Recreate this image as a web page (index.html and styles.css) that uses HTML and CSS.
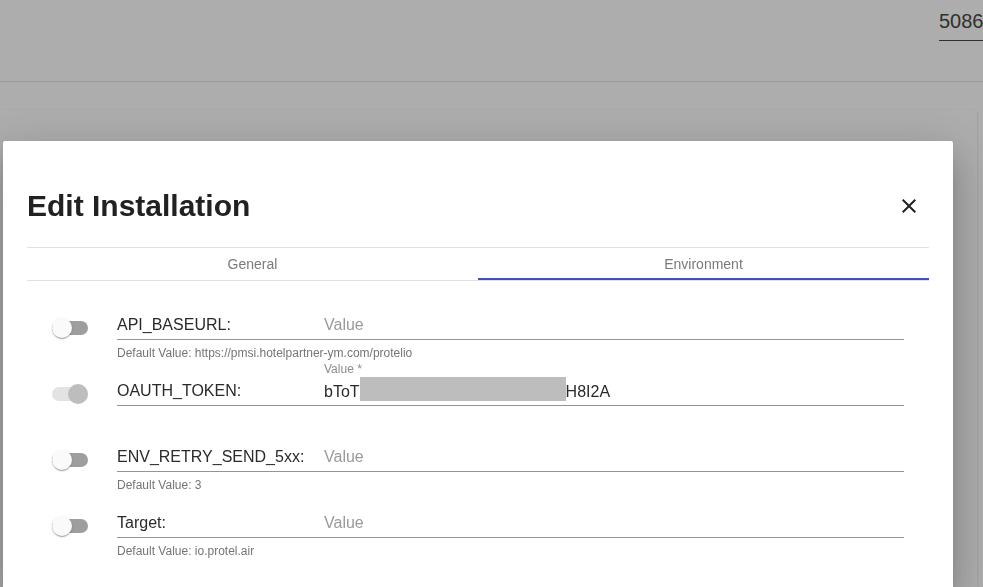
FILE: index.html
```html
<!DOCTYPE html>
<html lang="en">
<head>
<meta charset="utf-8">
<title>Edit Installation</title>
<link rel="stylesheet" href="styles.css">
</head>
<body>
<div class="app">
  <header class="topbar">
    <div class="search-field"><span class="search-value">5086</span></div>
  </header>
  <main class="content">
    <div class="card"></div>
  </main>
</div>
<div class="backdrop"></div>
<div class="dialog" role="dialog">
  <div class="dialog-header">
    <h1 class="dialog-title">Edit Installation</h1>
    <button class="close-btn" type="button" aria-label="Close">
      <svg viewBox="0 0 24 24" width="24" height="24"><path d="M19 6.41L17.59 5 12 10.59 6.41 5 5 6.41 10.59 12 5 17.59 6.41 19 12 13.41 17.59 19 19 17.59 13.41 12z" fill="#212121"/></svg>
    </button>
  </div>
  <div class="tabs">
    <div class="tab">General</div>
    <div class="tab tab-active">Environment</div>
  </div>
  <div class="env-list">
    <div class="env-row">
      <div class="toggle"><span class="toggle-knob"></span></div>
      <div class="field">
        <div class="field-box">
          <span class="field-label">API_BASEURL:</span>
          <div class="field-control">
            <span class="float-label"></span>
            <span class="field-input placeholder">Value</span>
          </div>
        </div>
        <div class="hint">Default Value: https://pmsi.hotelpartner-ym.com/protelio</div>
      </div>
    </div>
    <div class="env-row">
      <div class="toggle toggle-on"><span class="toggle-knob"></span></div>
      <div class="field">
        <div class="field-box">
          <span class="field-label">OAUTH_TOKEN:</span>
          <div class="field-control">
            <span class="float-label">Value *</span>
            <span class="field-input">bToT<span class="redacted"></span>H8I2A</span>
          </div>
        </div>
      </div>
    </div>
    <div class="env-row">
      <div class="toggle"><span class="toggle-knob"></span></div>
      <div class="field">
        <div class="field-box">
          <span class="field-label">ENV_RETRY_SEND_5xx:</span>
          <div class="field-control">
            <span class="float-label"></span>
            <span class="field-input placeholder">Value</span>
          </div>
        </div>
        <div class="hint">Default Value: 3</div>
      </div>
    </div>
    <div class="env-row">
      <div class="toggle"><span class="toggle-knob"></span></div>
      <div class="field">
        <div class="field-box">
          <span class="field-label">Target:</span>
          <div class="field-control">
            <span class="float-label"></span>
            <span class="field-input placeholder">Value</span>
          </div>
        </div>
        <div class="hint">Default Value: io.protel.air</div>
      </div>
    </div>
  </div>
</div>
</body>
</html>
```
FILE: styles.css
```css
* { box-sizing: border-box; }
html, body {
  margin: 0;
  width: 983px;
  height: 587px;
  overflow: hidden;
  background: #ffffff;
  font-family: "Liberation Sans", Arial, sans-serif;
}
.app {
  display: flex;
  flex-direction: column;
  height: 100%;
  overflow: hidden;
}
.topbar {
  height: 82px;
  flex: none;
  background: #ffffff;
  border-bottom: 1px solid #e4e4e4;
  display: flex;
  justify-content: flex-end;
  align-items: flex-start;
  overflow: hidden;
}
.search-field {
  width: 144px;
  margin-top: 9px;
  margin-right: -100px;
  flex: none;
  border-bottom: 1px solid #474747;
  padding-bottom: 7px;
}
.search-value {
  display: block;
  font-size: 20px;
  line-height: 24px;
  color: #474747;
}
.content {
  flex: 1;
  display: flex;
  padding-top: 28px;
  background: #ffffff;
  overflow: hidden;
}
.card {
  flex: 1;
  margin: 0 6px 0 0;
  background: #ffffff;
  border-radius: 0 4px 0 0;
  box-shadow: 0 2px 1px -1px rgba(0,0,0,.2), 0 1px 1px 0 rgba(0,0,0,.14), 0 1px 3px 0 rgba(0,0,0,.12);
}
.backdrop {
  position: fixed;
  inset: 0;
  background: rgba(0,0,0,.32);
}
.dialog {
  position: fixed;
  left: 3px;
  top: 141px;
  width: 950px;
  height: 446px;
  background: #ffffff;
  border-radius: 2px 2px 0 0;
  padding: 45px 24px 0;
  box-shadow: 0 11px 15px -7px rgba(0,0,0,.2), 0 24px 38px 3px rgba(0,0,0,.14), 0 9px 46px 8px rgba(0,0,0,.12);
}
.dialog-header {
  height: 40px;
  display: flex;
  align-items: center;
  justify-content: space-between;
}
.dialog-title {
  margin: 0;
  font-size: 30px;
  line-height: 36px;
  font-weight: 700;
  color: #212121;
}
.close-btn {
  width: 40px;
  height: 40px;
  padding: 0;
  border: none;
  background: transparent;
  display: flex;
  align-items: center;
  justify-content: center;
}
.tabs {
  margin-top: 21px;
  display: flex;
  border-top: 1px solid #e0e0e0;
  border-bottom: 1px solid #e0e0e0;
}
.tab {
  flex: 1;
  height: 32px;
  display: flex;
  align-items: center;
  justify-content: center;
  font-size: 14px;
  color: #7a7a7a;
}
.tab-active {
  box-shadow: inset 0 -2px 0 #3f51b5;
}
.env-list {
  padding: 15px 25px 0;
}
.env-row {
  display: flex;
  height: 66px;
}
.toggle {
  flex: none;
  width: 36px;
  height: 14px;
  margin-top: 25px;
  border-radius: 7px;
  background: #9e9e9e;
  display: flex;
  align-items: center;
  justify-content: flex-start;
}
.toggle-knob {
  flex: none;
  width: 20px;
  height: 20px;
  border-radius: 50%;
  background: #fafafa;
  box-shadow: 0 2px 1px -1px rgba(0,0,0,.2), 0 1px 1px 0 rgba(0,0,0,.14), 0 1px 3px 0 rgba(0,0,0,.12);
}
.toggle-on {
  background: #e3e3e3;
  justify-content: flex-end;
}
.toggle-on .toggle-knob {
  background: #bdbdbd;
  box-shadow: none;
}
.field {
  flex: 1;
  margin-left: 29px;
}
.field-box {
  display: flex;
  align-items: flex-end;
  padding-bottom: 4px;
  border-bottom: 1px solid #949494;
}
.field-label {
  flex: none;
  width: 207px;
  font-size: 16px;
  line-height: 20px;
  color: #2a2a2a;
}
.field-control {
  flex: 1;
  display: flex;
  flex-direction: column;
}
.float-label {
  height: 14px;
  margin-bottom: 5px;
  font-size: 12px;
  line-height: 14px;
  color: #8a8a8a;
}
.field-input {
  height: 20px;
  font-size: 16px;
  line-height: 20px;
  color: #2a2a2a;
  white-space: nowrap;
}
.placeholder {
  color: #9a9a9a;
}
.redacted {
  display: inline-block;
  width: 206px;
  height: 24px;
  margin-top: -4px;
  vertical-align: -4px;
  background: #bdbdbd;
}
.hint {
  margin-top: 6px;
  font-size: 12px;
  line-height: 14px;
  color: #757575;
}
```
